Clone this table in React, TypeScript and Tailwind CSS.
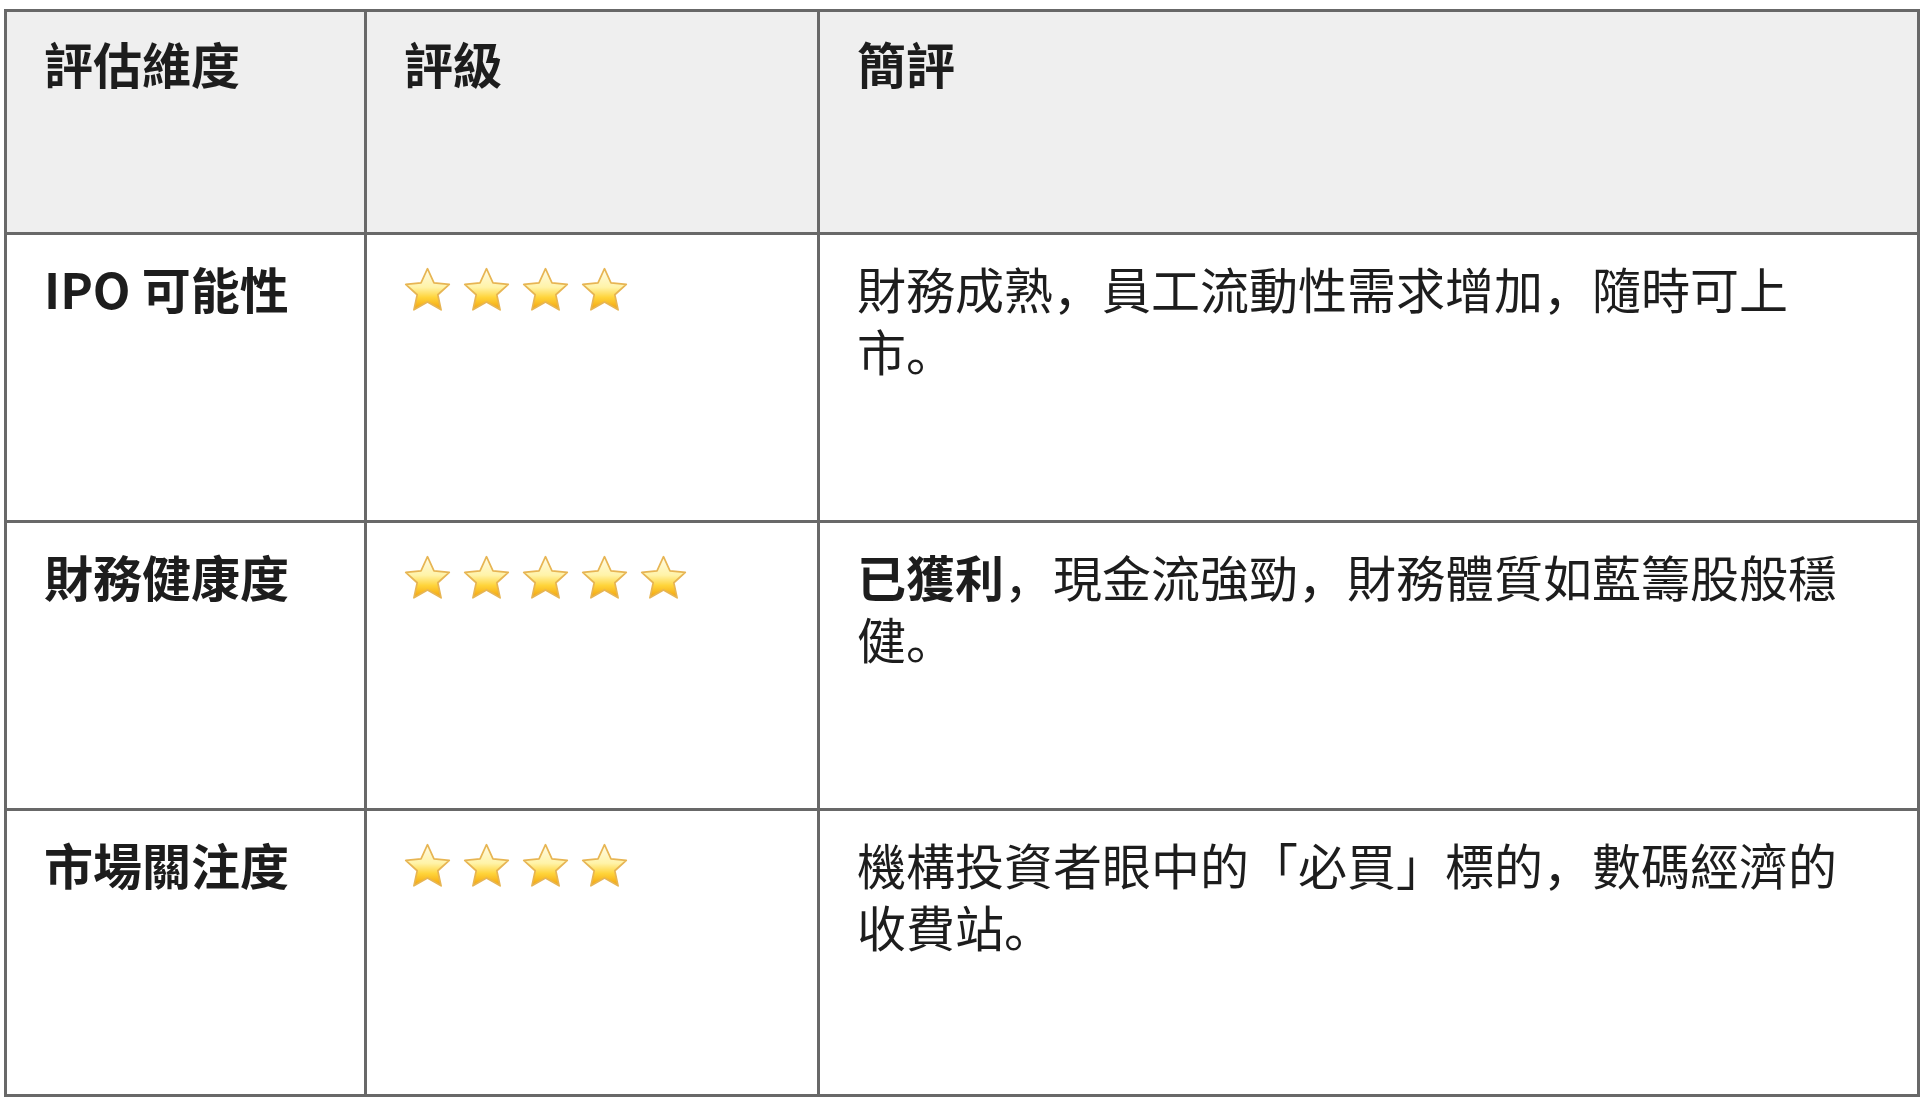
import { useId } from 'react';

const ROWS = [
  {
    label: 'IPO 可能性',
    stars: 4,
    note: [{ text: '財務成熟，員工流動性需求增加，隨時可上市。' }],
  },
  {
    label: '財務健康度',
    stars: 5,
    note: [
      { text: '已獲利', bold: true },
      { text: '，現金流強勁，財務體質如藍籌股般穩健。' },
    ],
  },
  {
    label: '市場關注度',
    stars: 4,
    note: [{ text: '機構投資者眼中的「必買」標的，數碼經濟的收費站。' }],
  },
];

function Star() {
  const id = useId();
  return (
    <svg viewBox="0 0 48 48" className="w-[51px] h-[51px] flex-shrink-0">
      <defs>
        <linearGradient id={`${id}f`} x1="0" y1="0" x2="0" y2="1">
          <stop offset="0" stopColor="#fffbe6" />
          <stop offset="0.45" stopColor="#fff3a8" />
          <stop offset="0.7" stopColor="#ffd43a" />
          <stop offset="1" stopColor="#f2a10c" />
        </linearGradient>
      </defs>
      <path
        d="M24 3.5l6.1 13.3 14.4 1.5-10.8 9.7 3.1 14.2L24 34.9l-12.8 7.3 3.1-14.2L3.5 18.3l14.4-1.5z"
        fill={`url(#${id}f)`}
        stroke="#e7b553"
        strokeWidth="1.6"
        strokeLinejoin="round"
      />
    </svg>
  );
}

export default function App() {
  return (
    <div
      className="w-[1920px] h-[1106px] bg-white pt-[9px] pl-[4px] text-[#1d1d1d]"
      style={{ fontFamily: '"Noto Sans CJK SC", "Noto Sans CJK TC", sans-serif' }}
    >
      <table className="table-fixed border-collapse w-[1913px] text-[49px] leading-[62px]">
        <colgroup>
          <col className="w-[360px]" />
          <col className="w-[453px]" />
          <col className="w-[1100px]" />
        </colgroup>
        <thead>
          <tr className="h-[223px] bg-[#efefef]">
            {['評估維度', '評級', '簡評'].map((h) => (
              <th
                key={h}
                className="border-[3px] border-[#686868] align-top text-left font-bold pl-[37px] pt-[20px]"
              >
                {h}
              </th>
            ))}
          </tr>
        </thead>
        <tbody>
          {ROWS.map((r, i) => (
            <tr key={r.label} className={i === 2 ? 'h-[286px]' : 'h-[288px]'}>
              <td className="border-[3px] border-[#686868] align-top pl-[37px] pt-[22px] font-bold">
                {r.label}
              </td>
              <td className="border-[3px] border-[#686868] align-top pl-[35px] pt-[30px]">
                <div className="flex gap-[8px]">
                  {Array.from({ length: r.stars }).map((_, k) => (
                    <Star key={k} />
                  ))}
                </div>
              </td>
              <td className="border-[3px] border-[#686868] align-top pl-[37px] pr-[60px] pt-[22px]">
                {r.note.map((n) => (
                  <span key={n.text} className={n.bold ? 'font-bold' : ''}>
                    {n.text}
                  </span>
                ))}
              </td>
            </tr>
          ))}
        </tbody>
      </table>
    </div>
  );
}
